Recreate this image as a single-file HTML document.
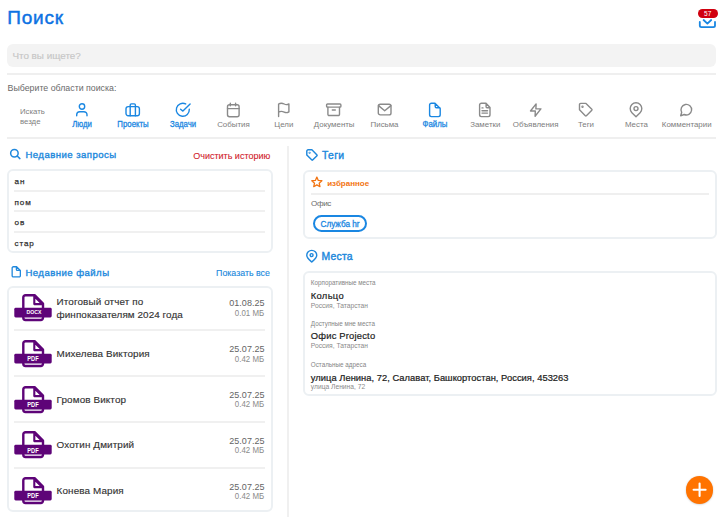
<!DOCTYPE html>
<html><head><meta charset="utf-8"><style>
html,body{margin:0;padding:0;background:#fff;overflow:hidden;}
body{width:722px;height:517px;position:relative;overflow:hidden;font-family:"Liberation Sans", sans-serif;}
.t{position:absolute;white-space:nowrap;line-height:1;}
svg{overflow:visible;}
</style></head><body>
<div class="t" style="left:7.30px;top:8.31px;font-size:19.0px;color:#0d72e3;font-weight:400;-webkit-text-stroke:0.45px #0d72e3;letter-spacing:0.8px;">Поиск</div>
<svg style="position:absolute;left:698px;top:18px;" width="20" height="11" viewBox="0 0 20 11" fill="none" stroke="#1a87e2" stroke-width="1.8" stroke-linecap="round" stroke-linejoin="round"><path d="M1.8 3.9 V7.6 a1.6 1.6 0 0 0 1.6 1.6 H15.4 a1.6 1.6 0 0 0 1.6 -1.6 V3.9"/><path d="M5.6 2 L9.4 5.6 L13.2 2"/></svg>
<div style="position:absolute;left:697.6px;top:8.8px;width:20px;height:8.8px;background:#d0000f;border-radius:4.4px;"></div>
<div class="t" style="left:607.70px;width:200px;text-align:center;top:10.70px;font-size:6.5px;color:#fff;font-weight:400;">57</div>
<div style="position:absolute;left:7px;top:44px;width:709px;height:23px;background:#f3f3f3;border-radius:6px;"></div>
<div class="t" style="left:12.40px;top:51.32px;font-size:9.9px;color:#c6c6c6;font-weight:400;-webkit-text-stroke:0.15px #c6c6c6;">Что вы ищете?</div>
<div style="position:absolute;left:7px;top:73px;width:709px;height:2px;background:#efefef;"></div>
<div class="t" style="left:7.60px;top:83.55px;font-size:8.8px;color:#6a6a6a;font-weight:400;">Выберите области поиска:</div>
<div class="t" style="left:20.00px;top:107.60px;font-size:7.8px;color:#7f7f7f;font-weight:400;">Искать</div>
<div class="t" style="left:20.00px;top:118.00px;font-size:7.8px;color:#7f7f7f;font-weight:400;">везде</div>
<svg style="position:absolute;left:74.4px;top:101.5px;" width="16" height="16" viewBox="0 0 16 16" fill="none" stroke="#1a87e2" stroke-width="1.4" stroke-linecap="round" stroke-linejoin="round"><circle cx="8" cy="4.5" r="2.7"/><path d="M2.7 13.7 V12.8 a3.1 3.1 0 0 1 3.1 -3.1 H9.9 a3.1 3.1 0 0 1 3.1 3.1 V13.7"/></svg>
<div class="t" style="left:-17.60px;width:200px;text-align:center;top:119.89px;font-size:8.4px;color:#1a87e2;font-weight:400;-webkit-text-stroke:0.3px #1a87e2;transform:scaleX(0.93);transform-origin:center top;">Люди</div>
<svg style="position:absolute;left:124.76px;top:101.5px;" width="16" height="16" viewBox="0 0 16 16" fill="none" stroke="#1a87e2" stroke-width="1.4" stroke-linecap="round" stroke-linejoin="round"><rect x="1.0" y="4.6" width="13.4" height="9.1" rx="2.2"/><path d="M5.2 13.7 V3.1 a1.2 1.2 0 0 1 1.2 -1.2 H9.2 a1.2 1.2 0 0 1 1.2 1.2 V13.7"/></svg>
<div class="t" style="left:32.76px;width:200px;text-align:center;top:119.89px;font-size:8.4px;color:#1a87e2;font-weight:400;-webkit-text-stroke:0.3px #1a87e2;transform:scaleX(0.93);transform-origin:center top;">Проекты</div>
<svg style="position:absolute;left:175.12px;top:101.5px;" width="16" height="16" viewBox="0 0 16 16" fill="none" stroke="#1a87e2" stroke-width="1.4" stroke-linecap="round" stroke-linejoin="round"><path d="M14.3 7.3 A6.5 6.5 0 1 1 10.7 1.9"/><path d="M5.6 7.3 L7.9 9.1 L15.1 1.9"/></svg>
<div class="t" style="left:83.12px;width:200px;text-align:center;top:119.89px;font-size:8.4px;color:#1a87e2;font-weight:400;-webkit-text-stroke:0.3px #1a87e2;transform:scaleX(0.93);transform-origin:center top;">Задачи</div>
<svg style="position:absolute;left:225.48px;top:101.5px;" width="16" height="16" viewBox="0 0 16 16" fill="none" stroke="#8a8a8a" stroke-width="1.4" stroke-linecap="round" stroke-linejoin="round"><rect x="2.5" y="2.7" width="11.6" height="12" rx="2"/><path d="M2.5 6.6 H14.1 M5.3 1.2 V3.8 M10.6 1.2 V3.8"/></svg>
<div class="t" style="left:133.48px;width:200px;text-align:center;top:120.71px;font-size:7.9px;color:#7d7d7d;font-weight:400;">События</div>
<svg style="position:absolute;left:275.84px;top:101.5px;" width="16" height="16" viewBox="0 0 16 16" fill="none" stroke="#8a8a8a" stroke-width="1.4" stroke-linecap="round" stroke-linejoin="round"><path d="M2.6 14.6 V2.0 C4.2 1.0 6.4 1.0 8.2 2.0 C10 3.0 11.4 2.8 12.9 1.9 V9.9 C11.4 10.8 10 11 8.2 10.1 C6.4 9.2 4.2 9.2 2.6 10.1"/></svg>
<div class="t" style="left:183.84px;width:200px;text-align:center;top:120.71px;font-size:7.9px;color:#7d7d7d;font-weight:400;">Цели</div>
<svg style="position:absolute;left:326.2px;top:101.5px;" width="16" height="16" viewBox="0 0 16 16" fill="none" stroke="#8a8a8a" stroke-width="1.4" stroke-linecap="round" stroke-linejoin="round"><rect x="0.6" y="2.0" width="14.3" height="3.1" rx="0.9"/><path d="M1.9 5.1 V12.3 a1.2 1.2 0 0 0 1.2 1.2 H12.3 a1.2 1.2 0 0 0 1.2 -1.2 V5.1 M6.3 8 H9.3"/></svg>
<div class="t" style="left:234.20px;width:200px;text-align:center;top:120.71px;font-size:7.9px;color:#7d7d7d;font-weight:400;">Документы</div>
<svg style="position:absolute;left:376.56px;top:101.5px;" width="16" height="16" viewBox="0 0 16 16" fill="none" stroke="#8a8a8a" stroke-width="1.4" stroke-linecap="round" stroke-linejoin="round"><rect x="1.3" y="2.3" width="12.7" height="10.6" rx="2"/><path d="M1.5 3.6 L7.7 8.7 L13.9 3.6"/></svg>
<div class="t" style="left:284.56px;width:200px;text-align:center;top:120.71px;font-size:7.9px;color:#7d7d7d;font-weight:400;">Письма</div>
<svg style="position:absolute;left:426.92px;top:101.5px;" width="16" height="16" viewBox="0 0 16 16" fill="none" stroke="#1a87e2" stroke-width="1.4" stroke-linecap="round" stroke-linejoin="round"><path d="M4.4 1.3 H8 L13.2 6.4 V12.8 a1.8 1.8 0 0 1 -1.8 1.8 H4.4 a1.8 1.8 0 0 1 -1.8 -1.8 V3.1 a1.8 1.8 0 0 1 1.8 -1.8 Z M8.2 1.6 V4.4 a1.3 1.3 0 0 0 1.3 1.3 H12.9"/></svg>
<div class="t" style="left:334.92px;width:200px;text-align:center;top:119.89px;font-size:8.4px;color:#1a87e2;font-weight:400;-webkit-text-stroke:0.3px #1a87e2;transform:scaleX(0.93);transform-origin:center top;">Файлы</div>
<svg style="position:absolute;left:477.28px;top:101.5px;" width="16" height="16" viewBox="0 0 16 16" fill="none" stroke="#8a8a8a" stroke-width="1.4" stroke-linecap="round" stroke-linejoin="round"><path d="M4.4 1.3 H9 L13 5.6 V12.8 a1.8 1.8 0 0 1 -1.8 1.8 H4.4 a1.8 1.8 0 0 1 -1.8 -1.8 V3.1 a1.8 1.8 0 0 1 1.8 -1.8 Z M9.1 1.8 V4.8 a0.9 0.9 0 0 0 0.9 0.9 H12.7 M5 5.9 H6 M5 8.8 H10.5 M5 11.1 H10.5"/></svg>
<div class="t" style="left:385.28px;width:200px;text-align:center;top:120.71px;font-size:7.9px;color:#7d7d7d;font-weight:400;">Заметки</div>
<svg style="position:absolute;left:527.64px;top:101.5px;" width="16" height="16" viewBox="0 0 16 16" fill="none" stroke="#8a8a8a" stroke-width="1.4" stroke-linecap="round" stroke-linejoin="round"><path d="M8.1 1.9 L2.5 9 H7.3 L7.1 14.2 L12.9 6.9 H7.9 Z"/></svg>
<div class="t" style="left:435.64px;width:200px;text-align:center;top:120.71px;font-size:7.9px;color:#7d7d7d;font-weight:400;">Объявления</div>
<svg style="position:absolute;left:578.0px;top:101.5px;" width="16" height="16" viewBox="0 0 16 16" fill="none" stroke="#8a8a8a" stroke-width="1.4" stroke-linecap="round" stroke-linejoin="round"><path d="M1.5 2.6 a1.2 1.2 0 0 1 1.2 -1.2 H8 L13.8 7.2 a0.8 0.8 0 0 1 0 1.1 L8.4 13.7 a0.8 0.8 0 0 1 -1.1 0 L1.5 7.8 Z"/><circle cx="4.5" cy="4.7" r="0.5"/></svg>
<div class="t" style="left:486.00px;width:200px;text-align:center;top:120.71px;font-size:7.9px;color:#7d7d7d;font-weight:400;">Теги</div>
<svg style="position:absolute;left:628.36px;top:101.5px;" width="16" height="16" viewBox="0 0 16 16" fill="none" stroke="#8a8a8a" stroke-width="1.4" stroke-linecap="round" stroke-linejoin="round"><path d="M8 14.7 L3.9 10.7 A5.8 5.8 0 1 1 12.1 10.7 Z"/><circle cx="8" cy="6.6" r="2"/></svg>
<div class="t" style="left:536.36px;width:200px;text-align:center;top:120.71px;font-size:7.9px;color:#7d7d7d;font-weight:400;">Места</div>
<svg style="position:absolute;left:678.72px;top:101.5px;" width="16" height="16" viewBox="0 0 16 16" fill="none" stroke="#8a8a8a" stroke-width="1.4" stroke-linecap="round" stroke-linejoin="round"><path d="M2.7 10.3 A5.3 5.3 0 1 1 5.1 12.5 L1.7 13.8 Z"/></svg>
<div class="t" style="left:586.72px;width:200px;text-align:center;top:120.71px;font-size:7.9px;color:#7d7d7d;font-weight:400;">Комментарии</div>
<div style="position:absolute;left:7px;top:137px;width:709px;height:2px;background:#efefef;"></div>
<div style="position:absolute;left:287px;top:146px;width:2px;height:371px;background:#f0f0f0;"></div>
<svg style="position:absolute;left:8.7px;top:147.8px;" width="12" height="12" viewBox="0 0 12 12" fill="none" stroke="#2088dc" stroke-width="1.5" stroke-linecap="round" stroke-linejoin="round"><circle cx="5.4" cy="5.2" r="3.75"/><path d="M8.2 8 L10.9 10.6"/></svg>
<div class="t" style="left:25.40px;top:150.37px;font-size:9.6px;color:#2088dc;font-weight:400;-webkit-text-stroke:0.35px #2088dc;letter-spacing:0.45px;">Недавние запросы</div>
<div class="t" style="right:451.80px;top:151.58px;font-size:9px;color:#d1222b;font-weight:400;-webkit-text-stroke:0.1px #d1222b;">Очистить историю</div>
<div style="position:absolute;left:7px;top:169px;width:266px;height:84px;border:2px solid #ecf0f3;border-radius:6px;box-sizing:border-box;"></div>
<div class="t" style="left:14.60px;top:178.34px;font-size:8.1px;color:#333;font-weight:400;-webkit-text-stroke:0.25px #333;letter-spacing:0.85px;">ан</div>
<div style="position:absolute;left:14px;top:190px;width:251px;height:2px;background:#f0f0f0;"></div>
<div class="t" style="left:14.60px;top:198.74px;font-size:8.1px;color:#333;font-weight:400;-webkit-text-stroke:0.25px #333;letter-spacing:0.85px;">пом</div>
<div style="position:absolute;left:14px;top:210px;width:251px;height:2px;background:#f0f0f0;"></div>
<div class="t" style="left:14.60px;top:219.14px;font-size:8.1px;color:#333;font-weight:400;-webkit-text-stroke:0.25px #333;letter-spacing:0.85px;">ов</div>
<div style="position:absolute;left:14px;top:231px;width:251px;height:2px;background:#f0f0f0;"></div>
<div class="t" style="left:14.60px;top:239.54px;font-size:8.1px;color:#333;font-weight:400;-webkit-text-stroke:0.25px #333;letter-spacing:0.85px;">стар</div>
<svg style="position:absolute;left:9.5px;top:264.5px;" width="12" height="13" viewBox="0 0 12 13" fill="none" stroke="#2088dc" stroke-width="1.3" stroke-linecap="round" stroke-linejoin="round"><path d="M3.3 1.75 H6.6 L10.35 5.5 V10.7 a1.15 1.15 0 0 1 -1.15 1.15 H3.3 a1.15 1.15 0 0 1 -1.15 -1.15 V2.9 a1.15 1.15 0 0 1 1.15 -1.15 Z M6.4 2 V4.4 a1 1 0 0 0 1 1 H10.1"/></svg>
<div class="t" style="left:25.40px;top:267.87px;font-size:9.6px;color:#2088dc;font-weight:400;-webkit-text-stroke:0.35px #2088dc;letter-spacing:0.45px;">Недавние файлы</div>
<div class="t" style="right:452.20px;top:268.95px;font-size:8.8px;color:#2088dc;font-weight:400;-webkit-text-stroke:0.12px #2088dc;">Показать все</div>
<div style="position:absolute;left:7px;top:286px;width:266px;height:226px;border:2px solid #ecf0f3;border-radius:6px;box-sizing:border-box;"></div>
<svg style="position:absolute;left:14.1px;top:293.8px;" width="38" height="28" viewBox="0 0 38 28"><path d="M11.5 1.2 H20.6 L29 9.6 V23.8 a2.2 2.2 0 0 1 -2.2 2.2 H11.5 a2.2 2.2 0 0 1 -2.2 -2.2 V3.4 a2.2 2.2 0 0 1 2.2 -2.2 Z" stroke="#5e0478" stroke-width="2.4" fill="none" stroke-linejoin="round"/><path d="M20.3 2.2 V10.1 H28.2 Z" stroke="#5e0478" stroke-width="2.1" fill="none" stroke-linejoin="round"/><rect x="0.3" y="13.8" width="37.4" height="9.7" rx="1.4" fill="#5e0478" stroke="none"/></svg>
<div class="t" style="left:-66.50px;width:200px;text-align:center;top:310.16px;font-size:5.6px;color:#fff;font-weight:700;transform:scaleX(0.92);transform-origin:center top;">DOCX</div>
<div class="t" style="left:56.60px;top:297.42px;font-size:9.9px;color:#333;font-weight:400;-webkit-text-stroke:0.15px #333;letter-spacing:0.12px;">Итоговый отчет по</div>
<div class="t" style="left:56.60px;top:309.62px;font-size:9.9px;color:#333;font-weight:400;-webkit-text-stroke:0.15px #333;letter-spacing:0.07px;">финпоказателям 2024 года</div>
<div class="t" style="right:457.60px;top:299.28px;font-size:9.0px;color:#646464;font-weight:400;">01.08.25</div>
<div class="t" style="right:457.60px;top:308.79px;font-size:8.4px;color:#8a8a8a;font-weight:400;transform:scaleX(0.94);transform-origin:right top;">0.01 МБ</div>
<div style="position:absolute;left:14px;top:329px;width:251px;height:2px;background:#f0f0f0;"></div>
<svg style="position:absolute;left:14.1px;top:339.79999999999995px;" width="38" height="28" viewBox="0 0 38 28"><path d="M11.5 1.2 H20.6 L29 9.6 V23.8 a2.2 2.2 0 0 1 -2.2 2.2 H11.5 a2.2 2.2 0 0 1 -2.2 -2.2 V3.4 a2.2 2.2 0 0 1 2.2 -2.2 Z" stroke="#5e0478" stroke-width="2.4" fill="none" stroke-linejoin="round"/><path d="M20.3 2.2 V10.1 H28.2 Z" stroke="#5e0478" stroke-width="2.1" fill="none" stroke-linejoin="round"/><rect x="0.3" y="13.8" width="37.4" height="9.7" rx="1.4" fill="#5e0478" stroke="none"/></svg>
<div class="t" style="left:-66.75px;width:200px;text-align:center;top:356.11px;font-size:6.6px;color:#fff;font-weight:700;transform:scaleX(0.86);transform-origin:center top;">PDF</div>
<div class="t" style="left:56.60px;top:349.02px;font-size:9.9px;color:#333;font-weight:400;-webkit-text-stroke:0.15px #333;letter-spacing:0.12px;">Михелева Виктория</div>
<div class="t" style="right:457.60px;top:345.48px;font-size:9.0px;color:#646464;font-weight:400;">25.07.25</div>
<div class="t" style="right:457.60px;top:354.69px;font-size:8.4px;color:#8a8a8a;font-weight:400;transform:scaleX(0.94);transform-origin:right top;">0.42 МБ</div>
<div style="position:absolute;left:14px;top:375px;width:251px;height:2px;background:#f0f0f0;"></div>
<svg style="position:absolute;left:14.1px;top:385.52px;" width="38" height="28" viewBox="0 0 38 28"><path d="M11.5 1.2 H20.6 L29 9.6 V23.8 a2.2 2.2 0 0 1 -2.2 2.2 H11.5 a2.2 2.2 0 0 1 -2.2 -2.2 V3.4 a2.2 2.2 0 0 1 2.2 -2.2 Z" stroke="#5e0478" stroke-width="2.4" fill="none" stroke-linejoin="round"/><path d="M20.3 2.2 V10.1 H28.2 Z" stroke="#5e0478" stroke-width="2.1" fill="none" stroke-linejoin="round"/><rect x="0.3" y="13.8" width="37.4" height="9.7" rx="1.4" fill="#5e0478" stroke="none"/></svg>
<div class="t" style="left:-66.75px;width:200px;text-align:center;top:401.83px;font-size:6.6px;color:#fff;font-weight:700;transform:scaleX(0.86);transform-origin:center top;">PDF</div>
<div class="t" style="left:56.60px;top:394.74px;font-size:9.9px;color:#333;font-weight:400;-webkit-text-stroke:0.15px #333;letter-spacing:0.12px;">Громов Виктор</div>
<div class="t" style="right:457.60px;top:391.20px;font-size:9.0px;color:#646464;font-weight:400;">25.07.25</div>
<div class="t" style="right:457.60px;top:400.41px;font-size:8.4px;color:#8a8a8a;font-weight:400;transform:scaleX(0.94);transform-origin:right top;">0.42 МБ</div>
<div style="position:absolute;left:14px;top:421px;width:251px;height:2px;background:#f0f0f0;"></div>
<svg style="position:absolute;left:14.1px;top:431.23999999999995px;" width="38" height="28" viewBox="0 0 38 28"><path d="M11.5 1.2 H20.6 L29 9.6 V23.8 a2.2 2.2 0 0 1 -2.2 2.2 H11.5 a2.2 2.2 0 0 1 -2.2 -2.2 V3.4 a2.2 2.2 0 0 1 2.2 -2.2 Z" stroke="#5e0478" stroke-width="2.4" fill="none" stroke-linejoin="round"/><path d="M20.3 2.2 V10.1 H28.2 Z" stroke="#5e0478" stroke-width="2.1" fill="none" stroke-linejoin="round"/><rect x="0.3" y="13.8" width="37.4" height="9.7" rx="1.4" fill="#5e0478" stroke="none"/></svg>
<div class="t" style="left:-66.75px;width:200px;text-align:center;top:447.55px;font-size:6.6px;color:#fff;font-weight:700;transform:scaleX(0.86);transform-origin:center top;">PDF</div>
<div class="t" style="left:56.60px;top:440.46px;font-size:9.9px;color:#333;font-weight:400;-webkit-text-stroke:0.15px #333;letter-spacing:0.12px;">Охотин Дмитрий</div>
<div class="t" style="right:457.60px;top:436.92px;font-size:9.0px;color:#646464;font-weight:400;">25.07.25</div>
<div class="t" style="right:457.60px;top:446.13px;font-size:8.4px;color:#8a8a8a;font-weight:400;transform:scaleX(0.94);transform-origin:right top;">0.42 МБ</div>
<div style="position:absolute;left:14px;top:467px;width:251px;height:2px;background:#f0f0f0;"></div>
<svg style="position:absolute;left:14.1px;top:476.9599999999999px;" width="38" height="28" viewBox="0 0 38 28"><path d="M11.5 1.2 H20.6 L29 9.6 V23.8 a2.2 2.2 0 0 1 -2.2 2.2 H11.5 a2.2 2.2 0 0 1 -2.2 -2.2 V3.4 a2.2 2.2 0 0 1 2.2 -2.2 Z" stroke="#5e0478" stroke-width="2.4" fill="none" stroke-linejoin="round"/><path d="M20.3 2.2 V10.1 H28.2 Z" stroke="#5e0478" stroke-width="2.1" fill="none" stroke-linejoin="round"/><rect x="0.3" y="13.8" width="37.4" height="9.7" rx="1.4" fill="#5e0478" stroke="none"/></svg>
<div class="t" style="left:-66.75px;width:200px;text-align:center;top:493.27px;font-size:6.6px;color:#fff;font-weight:700;transform:scaleX(0.86);transform-origin:center top;">PDF</div>
<div class="t" style="left:56.60px;top:486.18px;font-size:9.9px;color:#333;font-weight:400;-webkit-text-stroke:0.15px #333;letter-spacing:0.12px;">Конева Мария</div>
<div class="t" style="right:457.60px;top:482.64px;font-size:9.0px;color:#646464;font-weight:400;">25.07.25</div>
<div class="t" style="right:457.60px;top:491.85px;font-size:8.4px;color:#8a8a8a;font-weight:400;transform:scaleX(0.94);transform-origin:right top;">0.42 МБ</div>
<svg style="position:absolute;left:305px;top:148px;" width="13" height="13" viewBox="0 0 13 13" fill="none" stroke="#2088dc" stroke-width="1.45" stroke-linecap="round" stroke-linejoin="round"><path d="M1.8 3.1 a1.3 1.3 0 0 1 1.3 -1.3 H6.9 L12 7.0 a0.5 0.5 0 0 1 0 0.7 L7.6 12.1 a0.5 0.5 0 0 1 -0.7 0 L1.8 7.0 Z"/><circle cx="4.6" cy="4.7" r="0.35"/></svg>
<div class="t" style="left:322.00px;top:150.79px;font-size:10.4px;color:#2088dc;font-weight:400;-webkit-text-stroke:0.4px #2088dc;letter-spacing:0.3px;">Теги</div>
<div style="position:absolute;left:303px;top:170px;width:414px;height:69px;border:2px solid #ecf0f3;border-radius:6px;box-sizing:border-box;"></div>
<svg style="position:absolute;left:311px;top:176px;" width="12" height="12" viewBox="0 0 12 12" fill="none" stroke="#f27412" stroke-width="1.3" stroke-linecap="round" stroke-linejoin="round"><path d="M5.85 1.10 L7.29 4.42 L10.89 4.76 L8.18 7.16 L8.97 10.69 L5.85 8.85 L2.73 10.69 L3.52 7.16 L0.81 4.76 L4.41 4.42 Z"/></svg>
<div class="t" style="left:327.20px;top:180.13px;font-size:8px;color:#f27412;font-weight:700;">избранное</div>
<div style="position:absolute;left:311px;top:193px;width:398px;height:2px;background:#efefef;"></div>
<div class="t" style="left:311.00px;top:200.33px;font-size:8px;color:#6a6a6a;font-weight:400;letter-spacing:-0.3px;">Офис</div>
<div style="position:absolute;left:312.6px;top:215.2px;width:54.6px;height:16.6px;border:2px solid #1a87e2;border-radius:9px;box-sizing:border-box;"></div>
<div class="t" style="left:240.00px;width:200px;text-align:center;top:220.66px;font-size:8.2px;color:#1a87e2;font-weight:400;-webkit-text-stroke:0.3px #1a87e2;">Служба hr</div>
<svg style="position:absolute;left:305.1px;top:250px;" width="13" height="13" viewBox="0 0 13 13" fill="none" stroke="#2088dc" stroke-width="1.4" stroke-linecap="round" stroke-linejoin="round"><path d="M6.75 12 C5 10.6 1.75 8.3 1.75 5.35 A5 5 0 0 1 11.75 5.35 C11.75 8.3 8.5 10.6 6.75 12 Z"/><circle cx="6.6" cy="5.1" r="1.5"/></svg>
<div class="t" style="left:321.60px;top:251.69px;font-size:10.4px;color:#2088dc;font-weight:400;-webkit-text-stroke:0.4px #2088dc;letter-spacing:0.2px;">Места</div>
<div style="position:absolute;left:303px;top:271px;width:414px;height:125px;border:2px solid #ecf0f3;border-radius:6px;box-sizing:border-box;"></div>
<div class="t" style="left:310.80px;top:279.77px;font-size:6.3px;color:#858585;font-weight:400;">Корпоративные места</div>
<div class="t" style="left:310.80px;top:290.94px;font-size:9.4px;color:#222;font-weight:400;-webkit-text-stroke:0.2px #222;letter-spacing:0.3px;">Кольцо</div>
<div class="t" style="left:310.80px;top:302.53px;font-size:6.7px;color:#8a8a8a;font-weight:400;">Россия, Татарстан</div>
<div class="t" style="left:310.80px;top:320.57px;font-size:6.3px;color:#858585;font-weight:400;">Доступные мне места</div>
<div class="t" style="left:310.80px;top:331.24px;font-size:9.4px;color:#222;font-weight:400;-webkit-text-stroke:0.2px #222;letter-spacing:0.2px;">Офис Projecto</div>
<div class="t" style="left:310.80px;top:343.03px;font-size:6.7px;color:#8a8a8a;font-weight:400;">Россия, Татарстан</div>
<div class="t" style="left:310.80px;top:361.77px;font-size:6.3px;color:#858585;font-weight:400;">Остальные адреса</div>
<div class="t" style="left:310.80px;top:373.68px;font-size:9.35px;color:#222;font-weight:400;-webkit-text-stroke:0.22px #222;letter-spacing:0.03px;">улица Ленина, 72, Салават, Башкортостан, Россия, 453263</div>
<div class="t" style="left:310.80px;top:384.33px;font-size:6.7px;color:#8a8a8a;font-weight:400;">улица Ленина, 72</div>
<div style="position:absolute;left:685.5px;top:476.1px;width:27.6px;height:27.6px;background:#ff7300;border-radius:50%;box-shadow:0 0.5px 2px rgba(0,0,0,0.22);"></div>
<svg style="position:absolute;left:685.4px;top:476.1px;" width="27.6" height="27.6" viewBox="0 0 27.6 27.6" fill="none" stroke="#fff" stroke-width="2.1" stroke-linecap="round" stroke-linejoin="round"><path d="M8.6 13.8 H20.6 M14.6 7.6 V20"/></svg>
</body></html>
